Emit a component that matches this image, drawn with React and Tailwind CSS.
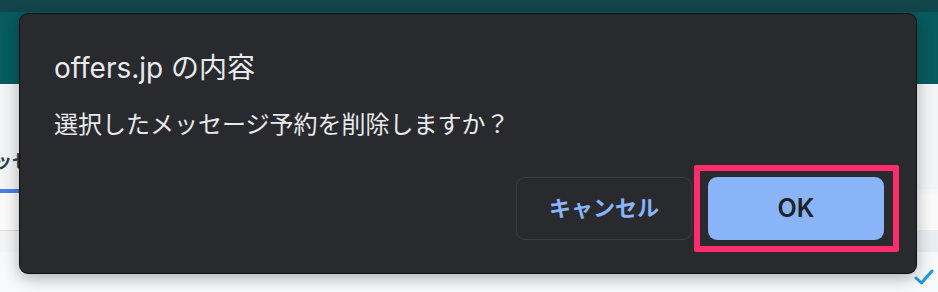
import React from 'react';

const jp = "font-['Inter','Noto_Sans_CJK_JP',sans-serif]";

const PageBehind = () => (
  <div className="flex h-[292px] w-[938px] flex-col bg-[#f7f8f9]">
    <div className="h-[12px] bg-[#12464b]" />
    <div className="h-[72px] bg-[#075b5f]" />
    <div className="flex h-[105px] items-start bg-[#f3f4f6]">
      <div className="mt-[63px] -ml-[24px] text-[18px] font-bold text-[#27404c] font-['Noto_Sans_CJK_JP',sans-serif]">
        メッセージ予約
      </div>
    </div>
    <div className="h-[4px] w-[200px] bg-[#4a80e2]" />
    <div className="flex h-[37px]">
      <div className="flex-1 bg-[#fafafa]" />
    </div>
    <div className="flex h-[22px]">
      <div className="w-[19px] border-t border-[#dcdee1] bg-[#f4f5f6]" />
      <div className="flex-1 bg-[#e9eef2]" />
    </div>
    <div className="flex flex-1 items-start justify-end bg-[#f8f9fa] pr-[4px] pt-[17px]">
      <svg width="20" height="16" viewBox="0 0 20 16" fill="none">
        <path d="M2 9l5.5 5L18 2" stroke="#1d9be6" strokeWidth="3" strokeLinecap="round" strokeLinejoin="round" />
      </svg>
    </div>
  </div>
);

const AlertDialog = () => (
  <div
    className={`absolute left-[19px] top-[13px] flex h-[261px] w-[898px] flex-col rounded-[9px] border border-black/60 bg-[#292a2d] pl-[34px] pr-[32px] shadow-[0_4px_16px_rgba(0,0,0,0.3)] ${jp}`}
  >
    <h1 className="mt-[38px] h-[33px] text-[28px] leading-[33px] text-[#e8eaed]">offers.jp の内容</h1>
    <p className="mt-[25px] h-[30px] text-[24px] leading-[30px] text-[#e8eaed]">
      選択したメッセージ予約を削除しますか？
    </p>
    <div className="mt-[37px] flex justify-end gap-[16px]">
      <button className="flex h-[63px] w-[176px] items-center justify-center rounded-[9px] border border-[#3c3d41] text-[22px] font-bold text-[#8ab4f8]">
        キャンセル
      </button>
      <div className="relative">
        <button className="flex h-[63px] w-[176px] items-center justify-center rounded-[9px] bg-[#8ab4f8] text-[25px] font-semibold text-[#202124]">
          OK
        </button>
        <div className="pointer-events-none absolute -bottom-[12px] -left-[14px] -right-[15px] -top-[12px] rounded-[2px] border-[6px] border-[#fd2d6b]" />
      </div>
    </div>
  </div>
);

const App = () => (
  <div className="relative h-[292px] w-[938px] overflow-hidden">
    <PageBehind />
    <AlertDialog />
  </div>
);

export default App;
